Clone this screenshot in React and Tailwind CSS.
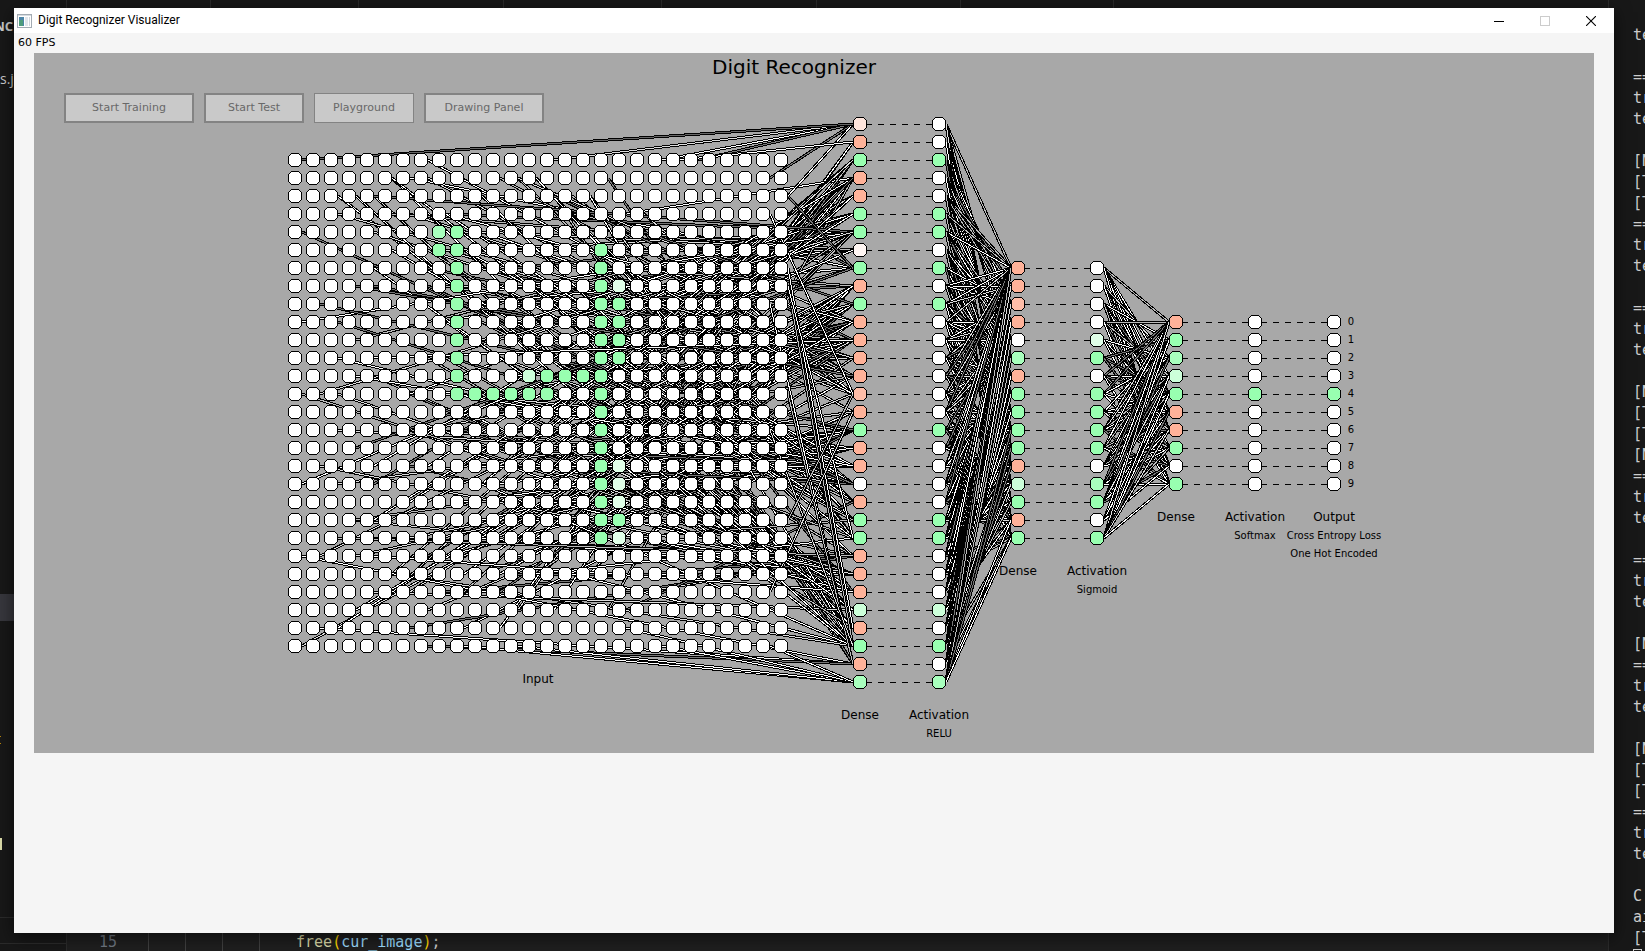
import React from "react";

const GREEN = "#98ffb0";
const SALMON = "#ffb299";

const PALETTE = {
  w: "#ffffff",
  G: GREEN,
  g: "#a8ffbd",
  l: "#ccffd9",
  v: "#e0ffe8",
  S: SALMON,
  s: "#ffbda8",
  p: "#ffe6dd",
  q: "#fff6f3",
};

const PITCH = 18;
const GRID = { x: 261, y: 107, size: 28 };

const LAYERS = [
  { x: 826, y: 71, cells: "pSGSSGGqGSGSSSSsSGSSwSGGSSSlSGSg" },
  { x: 905, y: 71, cells: "wwGwwGGwGwGwwwwwwGwwwwGGwwwlwGwg" },
  { x: 984, y: 215, cells: "SSsSwgSGGGGSlGSG" },
  { x: 1063, y: 215, cells: "wwwwvGwGGGGwgGwG" },
  { x: 1142, y: 269, cells: "SGglGSSGwG" },
  { x: 1221, y: 269, cells: "wwwwGwwwww" },
  { x: 1300, y: 269, cells: "wwwwGwwwww" },
];

// Pairs of neighbouring layers that map one to one.
const DASHED = [
  [0, 1],
  [2, 3],
  [4, 5],
  [5, 6],
];

// Active pixels of the digit, row -> { column: shade }
const PIXELS = {
  4: { 8: "g", 9: "G" },
  5: { 8: "G", 9: "G", 17: "G" },
  6: { 9: "G", 17: "G" },
  7: { 9: "G", 17: "G", 18: "v" },
  8: { 9: "G", 17: "G", 18: "G" },
  9: { 9: "G", 17: "G", 18: "G" },
  10: { 9: "G", 17: "G", 18: "G" },
  11: { 9: "G", 17: "G", 18: "G" },
  12: { 9: "G", 13: "l", 14: "G", 15: "G", 16: "G", 17: "G" },
  13: { 9: "G", 10: "G", 11: "G", 12: "G", 13: "G", 14: "G", 17: "G" },
  14: { 17: "G" },
  15: { 17: "G" },
  16: { 17: "G" },
  17: { 17: "G", 18: "v" },
  18: { 17: "G", 18: "v" },
  19: { 17: "G", 18: "v" },
  20: { 17: "G", 18: "G" },
  21: { 17: "G", 18: "v" },
};

const OUTER_WEIGHTS = [
  [0, 7, 15], [0, 14, 0], [0, 20, 0], [0, 22, 0], [1, 26, 0], [2, 27, 0], [0, 21, 1],
  [1, 5, 23], [2, 3, 29], [2, 4, 6], [4, 0, 20], [9, 0, 6], [8, 1, 17], [13, 0, 25],
  [13, 1, 6], [12, 3, 19], [6, 4, 27], [18, 0, 7], [17, 1, 25], [22, 0, 30],
  [22, 1, 9], [27, 0, 12], [26, 1, 30], [26, 2, 9], [3, 2, 13], [7, 3, 14],
  [11, 4, 12], [16, 3, 8], [20, 4, 5], [21, 2, 24], [25, 3, 11], [27, 7, 30],
  [27, 9, 31], [27, 12, 31], [27, 20, 31], [26, 18, 31], [27, 26, 31],
  [7, 27, 29], [6, 27, 28], [8, 26, 30], [3, 26, 15], [2, 27, 8], [7, 27, 23],
  [13, 27, 30], [15, 26, 29], [20, 27, 15], [24, 26, 16],
];

// Bands of neurons whose weights cross near one height left of the layer.
const BANDS = [
  { first: 1, last: 8, focus: 190 },
  { first: 9, last: 15, focus: 297 },
  { first: 16, last: 23, focus: 398 },
  { first: 24, last: 30, focus: 508 },
];

function createRandom(seed) {
  let state = seed;
  return () => {
    state = (state + 0x6d2b79f5) | 0;
    let t = Math.imul(state ^ (state >>> 15), 1 | state);
    t = (t + Math.imul(t ^ (t >>> 7), 61 | t)) ^ t;
    return ((t ^ (t >>> 14)) >>> 0) / 4294967296;
  };
}

const STROKES = ["#ffffff", "#ffffff", "#dddddd", "#bbbbbb", "#777777"];

function buildWeights() {
  const random = createRandom(41);
  const shade = () => STROKES[Math.floor(random() * STROKES.length)];
  const weights = [];
  const fromInput = (row, col, target, color) =>
    weights.push({
      x1: GRID.x + PITCH * col + 7,
      y1: GRID.y + PITCH * row,
      x2: LAYERS[0].x - 7,
      y2: LAYERS[0].y + PITCH * target,
      color,
    });

  let placed = 0;
  while (placed < 245) {
    const band = BANDS[Math.floor(random() * BANDS.length)];
    const target = band.first + Math.floor(random() * (band.last - band.first + 1));
    const col = 3 + Math.floor(random() * 25);
    const x2 = LAYERS[0].x - 7;
    const y2 = LAYERS[0].y + PITCH * target;
    const focus = band.focus + (random() - 0.5) * 30;
    const slope = (y2 - focus) / 66;
    const row = Math.round((y2 - slope * (x2 - GRID.x - PITCH * col) - GRID.y) / PITCH);
    if (row < 1 || row > 26) continue;
    fromInput(row, col, target, shade());
    placed += 1;
  }
  for (let i = 0; i < 70; i++) {
    const row = 1 + Math.floor(random() * 26);
    const col = 2 + Math.floor(random() * 18);
    fromInput(row, col, 2 + Math.floor(random() * 28), shade());
  }
  OUTER_WEIGHTS.forEach(([row, col, target]) => fromInput(row, col, target, shade()));
  fromInput(0, 0, 0, "#666666");

  const connect = (a, b, period, odds) => {
    const lastSum = a.cells.length + b.cells.length - 2;
    for (let i = 0; i < a.cells.length; i++) {
      for (let j = 0; j < b.cells.length; j++) {
        const sum = i + j;
        const keep = random() < (odds[sum % period] ?? 0);
        const corner = sum === 0 || sum === lastSum;
        const nearCorner = sum < period - 1 && period > 3;
        if (!corner && (nearCorner || !keep)) continue;
        weights.push({
          x1: a.x + 7,
          y1: a.y + PITCH * i,
          x2: b.x - 7,
          y2: b.y + PITCH * j,
          color: shade(),
        });
      }
    }
  };
  connect(LAYERS[1], LAYERS[2], 5, { 0: 1, 1: 0.8, 4: 0.5 });
  connect(LAYERS[3], LAYERS[4], 3, { 0: 1, 1: 0.3, 2: 0.1 });
  return weights;
}

const WEIGHTS = buildWeights();

const CAPTIONS = [
  { x: 504, y: 630, text: "Input" },
  { x: 826, y: 666, text: "Dense" },
  { x: 905, y: 666, text: "Activation" },
  { x: 984, y: 522, text: "Dense" },
  { x: 1063, y: 522, text: "Activation" },
  { x: 1142, y: 468, text: "Dense" },
  { x: 1221, y: 468, text: "Activation" },
  { x: 1300, y: 468, text: "Output" },
];

const NOTES = [
  { x: 905, y: 684, text: "RELU" },
  { x: 1063, y: 540, text: "Sigmoid" },
  { x: 1221, y: 486, text: "Softmax" },
  { x: 1300, y: 486, text: "Cross Entropy Loss" },
  { x: 1300, y: 504, text: "One Hot Encoded" },
];

function Neuron({ x, y, fill }) {
  return (
    <path
      d={`M${x - 3.5} ${y - 6.5}h7l3 3v7l-3 3h-7l-3 -3v-7z`}
      fill={fill}
      stroke="#000"
      strokeWidth="1"
    />
  );
}

function NetworkDiagram() {
  const cells = Array.from({ length: GRID.size * GRID.size }, (_, i) => {
    const row = Math.floor(i / GRID.size);
    const col = i % GRID.size;
    return { row, col, shade: PIXELS[row]?.[col] ?? "w" };
  });

  return (
    <svg
      viewBox="0 0 1560 700"
      className="col-start-1 row-start-1 block h-auto w-full font-['DejaVu_Sans',sans-serif]"
      role="img"
      aria-label="Neural network"
    >
      <g shapeRendering="crispEdges">
        {WEIGHTS.map(({ x1, y1, x2, y2, color }, i) => (
          <g key={i}>
            <line x1={x1} y1={y1} x2={x2} y2={y2} stroke="#000" strokeWidth="3" />
            <line x1={x1} y1={y1} x2={x2} y2={y2} stroke={color} strokeWidth="1" />
          </g>
        ))}
        {DASHED.map(([from, to]) =>
          [...LAYERS[from].cells].map((_, i) => (
            <line
              key={`${from}-${i}`}
              x1={LAYERS[from].x + 6}
              x2={LAYERS[to].x - 6}
              y1={LAYERS[from].y + PITCH * i + 0.5}
              y2={LAYERS[from].y + PITCH * i + 0.5}
              stroke="#000"
              strokeDasharray="6 6"
            />
          ))
        )}
        {cells.map(({ row, col, shade }) => (
          <Neuron
            key={`${row}-${col}`}
            x={GRID.x + PITCH * col}
            y={GRID.y + PITCH * row}
            fill={PALETTE[shade]}
          />
        ))}
        {LAYERS.map((layer, l) =>
          [...layer.cells].map((shade, i) => (
            <Neuron
              key={`${l}-${i}`}
              x={layer.x}
              y={layer.y + PITCH * i}
              fill={PALETTE[shade]}
            />
          ))
        )}
      </g>
      <g textAnchor="middle" fontSize="12">
        {CAPTIONS.map(({ x, y, text }) => (
          <text key={`${x}-${y}`} x={x} y={y}>
            {text}
          </text>
        ))}
      </g>
      <g textAnchor="middle" fontSize="10">
        {NOTES.map(({ x, y, text }) => (
          <text key={`${x}-${y}`} x={x} y={y}>
            {text}
          </text>
        ))}
        {[...LAYERS[6].cells].map((_, i) => (
          <text key={i} x={1317} y={LAYERS[6].y + PITCH * i + 3}>
            {i}
          </text>
        ))}
      </g>
    </svg>
  );
}

const ACTIONS = [
  { label: "Start Training", size: "w-[130px] border-2" },
  { label: "Start Test", size: "w-[100px] border-2" },
  { label: "Playground", size: "w-[100px] border" },
  { label: "Drawing Panel", size: "w-[120px] border-2" },
];

function TitleBar() {
  return (
    <header className="flex h-[25px] items-stretch bg-white pl-[3px]">
      <div className="flex flex-1 items-center gap-[6px]">
        <svg width="15" height="14" viewBox="0 0 15 14" shapeRendering="crispEdges">
          <rect x="0.5" y="0.5" width="14" height="13" fill="#fff" stroke="#a3abb3" />
          <rect x="1" y="1" width="13" height="1" fill="#d5dbe0" />
          <rect x="2" y="3" width="5" height="9" fill="#4c86a8" />
          <rect x="2" y="6" width="4" height="6" fill="#4f9d7c" />
          <rect x="8" y="3" width="3" height="9" fill="#e1e6ec" />
          <rect x="12" y="3" width="1" height="9" fill="#d0d7de" />
        </svg>
        <span className="pb-px font-[Roboto,sans-serif] text-[12px] leading-4 text-black">
          Digit Recognizer Visualizer
        </span>
      </div>
      <button type="button" aria-label="Minimize" className="flex w-[46px] items-center justify-center">
        <svg width="10" height="10" viewBox="0 0 10 10" shapeRendering="crispEdges">
          <rect x="0" y="5" width="10" height="1" fill="#000" />
        </svg>
      </button>
      <button type="button" aria-label="Maximize" disabled className="flex w-[46px] items-center justify-center">
        <svg width="10" height="10" viewBox="0 0 10 10" shapeRendering="crispEdges">
          <rect x="0.5" y="0.5" width="9" height="9" fill="none" stroke="#ccc" />
        </svg>
      </button>
      <button type="button" aria-label="Close" className="flex w-[46px] items-center justify-center">
        <svg width="10" height="10" viewBox="0 0 10 10">
          <path d="M0 0L10 10M10 0L0 10" stroke="#000" strokeWidth="1.1" />
        </svg>
      </button>
    </header>
  );
}

const TERMINAL = [
  "te", "", "==", "tr", "te", "", "[N", "[T", "[T", "==", "tr", "te", "", "==", "tr", "te", "",
  "[N", "[T", "[T", "[N", "==", "tr", "te", "", "==", "tr", "te", "", "[N", "==", "tr", "te", "",
  "[N", "[T", "[T", "==", "tr", "te", "", "C", "ai", "[T",
];

const TABS = [
  "w-[144px]", "w-[148px]", "w-[145px]", "w-[158px]", "w-[155px]", "w-[144px]", "w-[153px]",
];

function Editor() {
  return (
    <div className="absolute inset-0 flex overflow-hidden bg-[#181818] text-[#cccccc]">
      <aside className="flex w-[67px] shrink-0 flex-col border-r border-[#2b2b2b] font-['Open_Sans',sans-serif]">
        <div className="flex h-[54px] w-[13px] items-center justify-end text-[13px] font-bold">NC</div>
        <div className="h-[52px] text-[14px] leading-[50px]">s.js</div>
        <div className="mt-[488px] h-[27px] bg-[#37373d]" />
        <div className="mt-[115px] h-2 w-px border-y border-[#b8860b]" />
        <div className="mt-[94px] h-3 w-[2px] bg-[#dcdcaa]" />
        <div className="mt-[67px] border-t border-[#2b2b2b]" />
        <div className="mt-[25px] border-t border-[#2b2b2b]" />
      </aside>
      <main className="flex min-w-0 flex-1 flex-col bg-[#1f1f1f] font-['DejaVu_Sans_Mono',monospace] text-[15px]">
        <div className="flex h-[35px] bg-[#181818]">
          {TABS.map((width) => (
            <div key={width} className={`${width} shrink-0 border-r border-[#2b2b2b]`} />
          ))}
          <div className="flex-1 bg-[#181818]" />
        </div>
        <div className="mt-auto flex h-[18px] leading-[18px]">
          <span className="w-[50px] text-right text-[#6e7681]">15</span>
          <span className="ml-[31px] flex">
            <span className="w-[37px] border-l border-[#404040]" />
            <span className="w-[37px] border-l border-[#404040]" />
            <span className="w-[37px] border-l border-[#404040]" />
            <span className="w-[37px] border-l border-[#404040]" />
          </span>
          <code className="font-['DejaVu_Sans_Mono',monospace]">
            <span className="text-[#dcdcaa]">free</span>
            <span className="text-[#ffd700]">(</span>
            <span className="text-[#9cdcfe]">cur_image</span>
            <span className="text-[#ffd700]">)</span>;
          </code>
        </div>
      </main>
      <section className="w-[37px] shrink-0 overflow-hidden border-l border-[#2b2b2b] pl-6 pt-[25px] font-['DejaVu_Sans_Mono',monospace] text-[15px]">
        {TERMINAL.map((line, i) => (
          <div key={i} className="h-[21px] whitespace-pre leading-[21px]">
            {line}
          </div>
        ))}
        <div className="h-4 w-[9px] border border-[#cccccc]" />
      </section>
    </div>
  );
}

export default function App() {
  return (
    <div className="relative flex min-h-screen flex-col">
      <Editor />
      <div className="relative mb-[18px] ml-[14px] mr-[31px] mt-2 flex flex-1 flex-col bg-[#f5f5f5] shadow-[0_4px_16px_rgba(0,0,0,0.6)]">
        <TitleBar />
        <p className="h-5 pl-1 font-['DejaVu_Sans',sans-serif] text-[11px] leading-5 text-black">
          60 FPS
        </p>
        <main className="mx-5 grid bg-[#a8a8a8] text-black">
          <NetworkDiagram />
          <div className="relative col-start-1 row-start-1 flex flex-col self-start font-['DejaVu_Sans',sans-serif]">
            <h1 className="pr-10 pt-[2px] text-center text-[20px] leading-6">Digit Recognizer</h1>
            <div className="mt-[14px] flex gap-[10px] pl-[30px]">
              {ACTIONS.map(({ label, size }) => (
                <button
                  key={label}
                  type="button"
                  className={`${size} flex h-[30px] items-center justify-center border-[#838383] bg-[#c9c9c9] text-[11px] text-[#686868]`}
                >
                  {label}
                </button>
              ))}
            </div>
          </div>
        </main>
      </div>
    </div>
  );
}
